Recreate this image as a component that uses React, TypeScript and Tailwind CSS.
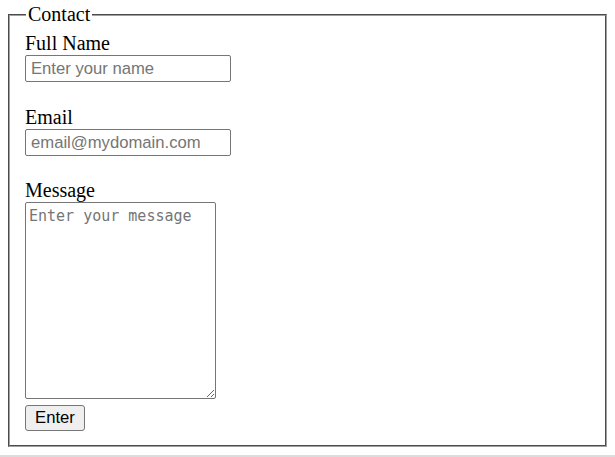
import React from 'react';

export default function App() {
  return (
    <div className="min-h-[457px] bg-white text-black">
      <form className="pt-[3px]">
        <fieldset className="mx-2 border-2 border-[#a0a0a0] [border-style:groove] px-[15px] pt-[6px] pb-[14px] font-['Liberation_Serif',serif]">
          <legend className="ml-[1px] px-0.5 text-[20px] leading-[23px]">Contact</legend>
          <div className="flex flex-col items-start">
            <label htmlFor="name" className="text-[20px] leading-[23px]">
              Full Name
            </label>
            <input
              id="name"
              type="text"
              placeholder="Enter your name"
              className="h-[27px] w-[206px] rounded-[2px] border border-[#767676] pl-[5px] font-['Liberation_Sans',Arial,sans-serif] text-[16.67px] placeholder:text-[#757575]"
            />
            <label htmlFor="email" className="mt-[24px] text-[20px] leading-[23px]">
              Email
            </label>
            <input
              id="email"
              type="email"
              placeholder="email@mydomain.com"
              className="h-[27px] w-[206px] rounded-[2px] border border-[#767676] pl-[5px] font-['Liberation_Sans',Arial,sans-serif] text-[16.67px] placeholder:text-[#757575]"
            />
            <label htmlFor="message" className="mt-[23px] text-[20px] leading-[23px]">
              Message
            </label>
            <textarea
              id="message"
              placeholder="Enter your message"
              className="h-[197px] w-[191px] rounded-[2px] border border-[#767676] px-[3px] pt-[4px] font-['DejaVu_Sans_Mono',monospace] text-[15px] leading-[18px] placeholder:text-[#757575]"
            />
            <button
              type="submit"
              className="mt-[6px] h-[26px] w-[60px] rounded-[3px] border border-[#767676] bg-[#efefef] font-['Liberation_Sans',Arial,sans-serif] text-[16.67px] leading-none"
            >
              Enter
            </button>
          </div>
        </fieldset>
      </form>
      <div className="mt-[8px] h-[2px] bg-[#dcdcdc]" />
    </div>
  );
}
